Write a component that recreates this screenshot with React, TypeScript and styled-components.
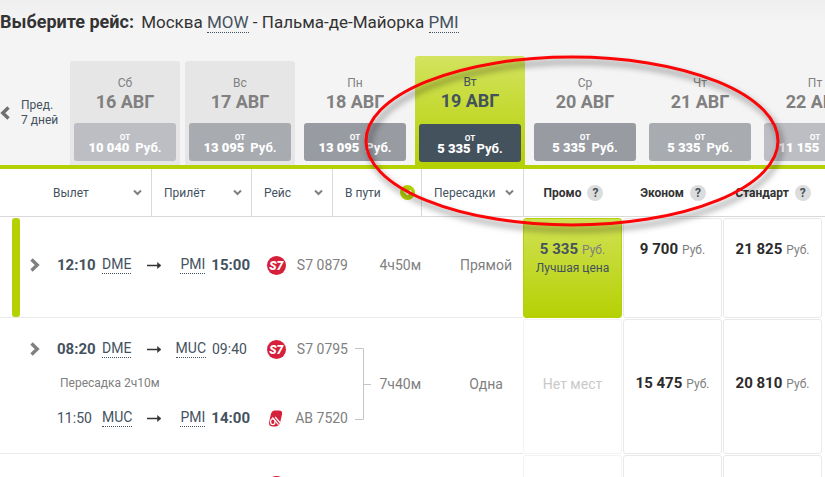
import React from "react";
import styled, { createGlobalStyle, css } from "styled-components";

const LIME = "#b5d104";
const SLATE = "#44525e";
const LINE = "#d9d9d9";
const SOFT_LINE = "#e9e9e9";

const GlobalStyle = createGlobalStyle`
  *, *::before, *::after { box-sizing: border-box; }
  body {
    margin: 0;
    overflow: hidden;
    background: #fff;
    color: #333;
    font-family: Roboto, "Noto Sans", "Liberation Sans", sans-serif;
    font-size: 14px;
  }
  button { font: inherit; color: inherit; border: 0; background: none; padding: 0; cursor: pointer; }
`;

const Page = styled.main`
  position: relative;
  height: 100vh;
  overflow: hidden;
`;

const Header = styled.header`
  background: linear-gradient(#efefef, #f4f4f4 24px);
  border-bottom: 4px solid ${LIME};
  overflow: hidden;
`;

const Title = styled.h1`
  margin: 0;
  padding-top: 10px;
  height: 56px;
  font-size: 17px;
  line-height: 24px;
  font-weight: 400;
  color: #333;
  white-space: nowrap;
  strong { font-size: 18px; font-weight: 700; margin-right: 3px; }
`;

const Code = styled.abbr`
  color: ${SLATE};
  text-decoration: none;
  border-bottom: 1px dotted ${SLATE};
`;

const DayStrip = styled.nav`
  display: flex;
  align-items: flex-end;
  gap: 5px;
`;

const PrevButton = styled.button`
  flex: 0 0 65px;
  height: 104px;
  display: flex;
  align-items: center;
  gap: 11px;
  text-align: left;
  font-size: 12px;
  line-height: 15px;
  color: ${SLATE};
`;

type Tone = "light" | "mid" | "dark";
const tones: Record<Tone, string> = { light: "#bcbec3", mid: "#a8abaf", dark: "#989ba1" };

const DayCard = styled.button<{ $weekend?: boolean; $selected?: boolean }>`
  flex: 1 0 110px;
  height: 104px;
  padding: 14px 4px 4px;
  display: flex;
  flex-direction: column;
  align-items: stretch;
  text-align: center;
  color: #808080;
  border-radius: 3px 3px 0 0;
  ${(p) => p.$weekend && css`background: #e6e6e6;`}
  ${(p) =>
    p.$selected &&
    css`
      height: 109px;
      padding: 18px 4px 3px;
      color: ${SLATE};
      background: linear-gradient(#d3e35f, ${LIME});
    `}
`;

const Weekday = styled.span`
  font-size: 12px;
  line-height: 16px;
`;

const DayDate = styled.span`
  font-size: 18px;
  line-height: 22px;
  font-weight: 700;
`;

const DayPrice = styled.span<{ $tone: Tone; $selected?: boolean }>`
  margin-top: auto;
  height: 38px;
  padding-top: 9px;
  border-radius: 3px;
  color: #fff;
  background: ${(p) => (p.$selected ? SLATE : tones[p.$tone])};
  font-size: 13px;
  line-height: 12px;
  font-weight: 700;
  white-space: nowrap;
  small { display: block; font-size: 10px; line-height: 10px; font-weight: 500; }
  b { margin-right: 6px; }
`;

const Results = styled.table`
  width: 100%;
  table-layout: fixed;
  border-spacing: 0;
`;

const HeadCell = styled.th<{ $plain?: boolean }>`
  height: 48px;
  padding: 0;
  white-space: nowrap;
  border-bottom: 1px solid ${LINE};
  ${(p) => !p.$plain && css`border-left: 1px solid ${LINE};`}
`;

const SortButton = styled.button<{ $first?: boolean }>`
  width: 100%;
  padding: 0 6px 0 ${(p) => (p.$first ? "53px" : "12px")};
  display: flex;
  align-items: center;
  justify-content: space-between;
  font-size: 12px;
  line-height: 16px;
  font-weight: 400;
  color: ${SLATE};
`;

const SortMark = styled.span<{ $active?: boolean }>`
  flex: none;
  display: grid;
  place-items: center;
  width: 15px;
  height: 15px;
  border-radius: 50%;
  color: ${(p) => (p.$active ? "#fff" : "#808080")};
  background: ${(p) => (p.$active ? LIME : "transparent")};
`;

const FareHead = styled.div`
  display: flex;
  align-items: center;
  justify-content: center;
  gap: 6px;
  font-size: 12px;
  line-height: 16px;
  font-weight: 700;
  color: #333;
`;

const HelpButton = styled.button`
  flex: none;
  width: 16px;
  height: 16px;
  border-radius: 50%;
  background: #dcdcdc;
  color: ${SLATE};
  font-size: 12px;
  line-height: 16px;
  font-weight: 700;
`;

const Cell = styled.td<{ $h: number; $align?: "left" | "right" | "center" }>`
  position: relative;
  height: ${(p) => p.$h}px;
  padding: 0 0 4px;
  vertical-align: middle;
  text-align: ${(p) => p.$align || "left"};
  white-space: nowrap;
  font-size: 14px;
  line-height: 24px;
  color: #808080;
  border-bottom: 1px solid ${SOFT_LINE};
`;

const RouteLayout = styled.div`
  display: flex;
  padding: 0 1px 0 30px;
`;

const BestBar = styled.span`
  position: absolute;
  left: 12px;
  top: 1px;
  bottom: 0;
  width: 8px;
  border-radius: 3px;
  background: ${LIME};
`;

const ExpandButton = styled.button`
  flex: 0 0 27px;
  height: 24px;
  display: flex;
  align-items: center;
  color: #808080;
`;

const Legs = styled.div`
  flex: 1;
  display: grid;
  row-gap: 14px;
`;

const Leg = styled.div`
  display: grid;
  grid-template-columns: 39px 39px 1fr auto;
  column-gap: 6px;
  align-items: center;
  height: 24px;
  color: ${SLATE};
  ${Code} { justify-self: start; line-height: 17px; }
`;

const LegEnd = styled.span`
  display: flex;
  align-items: center;
  gap: 6px;
`;

const Time = styled.span<{ $bold?: boolean }>`
  min-width: 38px;
  ${(p) => p.$bold && css`font-size: 15px; font-weight: 700;`}
`;

const Transfer = styled.div`
  padding-left: 3px;
  font-size: 12px;
  line-height: 17px;
  color: #808080;
`;

const Flights = styled.div`
  display: grid;
  row-gap: 45px;
  padding: 0 8px 0 16px;
`;

const Flight = styled.div`
  display: flex;
  align-items: center;
  justify-content: space-between;
  height: 24px;
`;

const Duration = styled.div`
  display: flex;
  align-items: center;
  justify-content: flex-end;
  gap: 8px;
  svg { flex: none; }
`;

const StopsText = styled.span`
  display: block;
  padding-left: 28px;
`;

const NextFlight = styled.div`
  height: 112px;
  padding: 22px 0 0 16px;
`;

const FareCell = styled.td<{ $h: number }>`
  height: ${(p) => p.$h}px;
  padding: 1px 1px 0 0;
`;

const FareButton = styled.button<{ $best?: boolean; $top?: boolean }>`
  width: 100%;
  height: 100%;
  display: flex;
  flex-direction: column;
  align-items: center;
  justify-content: ${(p) => (p.$top ? "flex-start" : "center")};
  padding: ${(p) => (p.$top ? "21px 0 0" : "0 0 6px")};
  border: 1px solid ${SOFT_LINE};
  border-radius: 3px;
  white-space: nowrap;
  font-size: 12px;
  line-height: 18px;
  color: #808080;
  b { font-size: 15px; color: #2b2b2b; margin-right: 4px; }
  &:disabled { font-size: 14px; color: #c9c9c9; border-color: #f3f3f3; }
  ${(p) =>
    p.$best &&
    css`
      border-color: ${LIME};
      background: linear-gradient(#d0e155, ${LIME});
      b, em { color: ${SLATE}; font-style: normal; }
    `}
`;

const Highlight = styled.svg`
  position: absolute;
  left: 360px;
  top: 50px;
  width: 430px;
  height: 190px;
  overflow: visible;
  pointer-events: none;
  filter: drop-shadow(3px 5px 3px rgba(0, 0, 0, 0.5));
`;

function Chevron({ dir }: { dir: "left" | "right" }) {
  return (
    <svg width="10" height="14" viewBox="0 0 10 14" fill="none" stroke={dir === "left" ? "#707070" : "#808080"} strokeWidth="3.4">
      <path d={dir === "right" ? "M1.5 1.5 7.2 7 1.5 12.5" : "M8.5 1.5 2.8 7 8.5 12.5"} />
    </svg>
  );
}

function Down() {
  return (
    <svg width="9" height="7" viewBox="0 0 9 7" fill="none" stroke="currentColor" strokeWidth="2">
      <path d="M1 1.5 4.5 5 8 1.5" />
    </svg>
  );
}

function Arrow() {
  return (
    <svg width="15" height="9" viewBox="0 0 15 9" fill="none" stroke="#333">
      <path d="M0 4.5H13" strokeWidth="1.5" />
      <path d="M10.5 1.5 14 4.5 10.5 7.5Z" fill="#333" strokeWidth="0.5" />
    </svg>
  );
}

function S7Logo() {
  return (
    <svg width="19" height="19" viewBox="0 0 19 19" aria-label="S7">
      <circle cx="9.5" cy="9.5" r="9.5" fill="#d61f3a" />
      <text x="9.2" y="13.8" textAnchor="middle" fontFamily="Roboto, sans-serif" fontSize="12" fontStyle="italic" fontWeight="900" fill="#fff">
        S7
      </text>
    </svg>
  );
}

function AirBerlinLogo() {
  return (
    <svg width="19" height="17" viewBox="0 0 19 17" aria-label="Air Berlin">
      <path d="M8 .5H12C14.6 .5 15.6 2 15 4.6L13.4 11.5C12.6 15 11 16.5 8 16.5H5.4C2.6 16.5 1.6 14.6 2.2 11.8L3.8 4.6C4.5 1.8 5.6 .5 8 .5Z" fill="#d61f3a" />
      <g fill="none" stroke="#fff" strokeWidth="1.2">
        <ellipse cx="5.8" cy="11.8" rx="2.2" ry="2.9" />
        <path d="M5.4 7.4 11.4 14.6M8.2 7 13.2 13" />
      </g>
    </svg>
  );
}

function Bracket() {
  return (
    <svg width="16" height="72" viewBox="0 0 16 72" fill="none" stroke="#c4c4c4">
      <path d="M0 .5H8.5V71.5H0M8.5 36.5H16" />
    </svg>
  );
}

type Day = { wd: string; date: string; price: string; tone: Tone; weekend?: boolean; selected?: boolean };
const days: Day[] = [
  { wd: "Сб", date: "16 АВГ", price: "10 040", tone: "light", weekend: true },
  { wd: "Вс", date: "17 АВГ", price: "13 095", tone: "mid", weekend: true },
  { wd: "Пн", date: "18 АВГ", price: "13 095", tone: "dark" },
  { wd: "Вт", date: "19 АВГ", price: "5 335", tone: "dark", selected: true },
  { wd: "Ср", date: "20 АВГ", price: "5 335", tone: "dark" },
  { wd: "Чт", date: "21 АВГ", price: "5 335", tone: "mid" },
  { wd: "Пт", date: "22 АВГ", price: "11 155", tone: "light" },
];

const sorts = [
  { label: "Вылет", span: 1 },
  { label: "Прилёт", span: 1 },
  { label: "Рейс", span: 1 },
  { label: "В пути", span: 2, active: true },
  { label: "Пересадки", span: 1 },
];

type LegData = {
  dep: string; from: string; to: string; arr: string; depBold?: boolean; arrBold?: boolean;
  carrier: "S7" | "AB"; flight: string;
};
type Trip = {
  height: number; legs: LegData[]; transfer?: string; duration: string; stops: string;
  fares: (string | null)[]; best?: boolean;
};
const trips: Trip[] = [
  {
    height: 101,
    best: true,
    legs: [{ dep: "12:10", from: "DME", to: "PMI", arr: "15:00", depBold: true, arrBold: true, carrier: "S7", flight: "S7 0879" }],
    duration: "4ч50м",
    stops: "Прямой",
    fares: ["5 335", "9 700", "21 825"],
  },
  {
    height: 136,
    legs: [
      { dep: "08:20", from: "DME", to: "MUC", arr: "09:40", depBold: true, carrier: "S7", flight: "S7 0795" },
      { dep: "11:50", from: "MUC", to: "PMI", arr: "14:00", arrBold: true, carrier: "AB", flight: "AB 7520" },
    ],
    transfer: "Пересадка 2ч10м",
    duration: "7ч40м",
    stops: "Одна",
    fares: [null, "15 475", "20 810"],
  },
];

const columns = [151, 100, 81, 24, 65, 102, 100, 100, 100, 2];

function TripRow({ trip }: { trip: Trip }) {
  const h = trip.height;
  return (
    <tr>
      <Cell $h={h} colSpan={2}>
        {trip.best && <BestBar />}
        <RouteLayout>
          <ExpandButton aria-label="Подробнее"><Chevron dir="right" /></ExpandButton>
          <Legs>
            {trip.legs.map((leg, i) => (
              <React.Fragment key={leg.dep}>
                {i > 0 && <Transfer>{trip.transfer}</Transfer>}
                <Leg>
                  <Time $bold={leg.depBold}>{leg.dep}</Time>
                  <Code>{leg.from}</Code>
                  <Arrow />
                  <LegEnd>
                    <Code>{leg.to}</Code>
                    <Time $bold={leg.arrBold}>{leg.arr}</Time>
                  </LegEnd>
                </Leg>
              </React.Fragment>
            ))}
          </Legs>
        </RouteLayout>
      </Cell>
      <Cell $h={h} colSpan={2}>
        <Flights>
          {trip.legs.map((leg) => (
            <Flight key={leg.flight}>
              {leg.carrier === "S7" ? <S7Logo /> : <AirBerlinLogo />}
              {leg.flight}
            </Flight>
          ))}
        </Flights>
      </Cell>
      <Cell $h={h}>
        <Duration>
          {trip.legs.length > 1 && <Bracket />}
          {trip.duration}
        </Duration>
      </Cell>
      <Cell $h={h} $align="center"><StopsText>{trip.stops}</StopsText></Cell>
      {trip.fares.map((fare, i) => (
        <FareCell key={i} $h={h}>
          {fare ? (
            <FareButton $best={trip.best && i === 0} $top={trip.best}>
              <span><b>{fare}</b>Руб.</span>
              {trip.best && i === 0 && <em>Лучшая цена</em>}
            </FareButton>
          ) : (
            <FareButton disabled>Нет мест</FareButton>
          )}
        </FareCell>
      ))}
      <FareCell $h={h} />
    </tr>
  );
}

export default function App() {
  return (
    <Page>
      <GlobalStyle />
      <Header>
        <Title>
          <strong>Выберите рейс:</strong> Москва <Code>MOW</Code> - Пальма-де-Майорка <Code>PMI</Code>
        </Title>
        <DayStrip>
          <PrevButton>
            <Chevron dir="left" />
            <span>Пред.<br />7 дней</span>
          </PrevButton>
          {days.map((d) => (
            <DayCard key={d.date} $weekend={d.weekend} $selected={d.selected}>
              <Weekday>{d.wd}</Weekday>
              <DayDate>{d.date}</DayDate>
              <DayPrice $tone={d.tone} $selected={d.selected}>
                <small>от</small>
                <b>{d.price}</b>Руб.
              </DayPrice>
            </DayCard>
          ))}
        </DayStrip>
      </Header>
      <Results>
        <colgroup>
          {columns.map((w, i) => <col key={i} width={w} />)}
        </colgroup>
        <thead>
          <tr>
            {sorts.map((s, i) => (
              <HeadCell key={s.label} colSpan={s.span} $plain={i === 0}>
                <SortButton $first={i === 0}>
                  {s.label}
                  <SortMark $active={s.active}><Down /></SortMark>
                </SortButton>
              </HeadCell>
            ))}
            {["Промо", "Эконом", "Стандарт"].map((f, i) => (
              <HeadCell key={f} $plain={i > 0}>
                <FareHead>{f}<HelpButton aria-label={`О тарифе ${f}`}>?</HelpButton></FareHead>
              </HeadCell>
            ))}
            <HeadCell $plain />
          </tr>
        </thead>
        <tbody>
          {trips.map((t) => <TripRow key={t.legs[0].flight} trip={t} />)}
          <tr>
            <Cell $h={112} colSpan={2} />
            <Cell $h={112} colSpan={2}><NextFlight><S7Logo /></NextFlight></Cell>
            <Cell $h={112} colSpan={2} />
            <FareCell $h={112}><FareButton disabled /></FareCell>
            <FareCell $h={112}><FareButton /></FareCell>
            <FareCell $h={112}><FareButton /></FareCell>
            <FareCell $h={112} />
          </tr>
        </tbody>
      </Results>
      <Highlight viewBox="0 0 430 190" aria-hidden="true">
        <ellipse cx="212" cy="91" rx="206" ry="84" fill="none" stroke="#fb0507" strokeWidth="3" />
      </Highlight>
    </Page>
  );
}
